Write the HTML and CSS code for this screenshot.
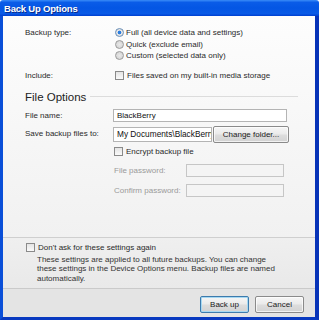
FILE: index.html
```html
<!DOCTYPE html>
<html>
<head>
<meta charset="utf-8">
<link rel="stylesheet" href="styles.css">
</head>
<body>
<div class="window">
  <div class="titlebar"><span class="title">Back Up Options</span></div>
  <div class="frame">
    <div class="client">
      <div class="upper">
        <div class="row row-type">
          <div class="label">Backup type:</div>
          <div class="options">
            <div class="opt"><span class="radio checked"></span>Full (all device data and settings)</div>
            <div class="opt"><span class="radio"></span>Quick (exclude email)</div>
            <div class="opt"><span class="radio"></span>Custom (selected data only)</div>
          </div>
        </div>
        <div class="row row-include">
          <div class="label">Include:</div>
          <div class="opt"><span class="check"></span>Files saved on my built-in media storage</div>
        </div>
        <div class="heading"><span>File Options</span><span class="rule"></span></div>
        <div class="row row-name">
          <div class="label">File name:</div>
          <div class="input input-name">BlackBerry</div>
        </div>
        <div class="row row-save">
          <div class="label">Save backup files to:</div>
          <div class="input input-save">My Documents\BlackBerry</div>
          <div class="btn btn-folder">Change folder...</div>
        </div>
        <div class="row row-encrypt">
          <div class="label"></div>
          <div class="opt"><span class="check"></span>Encrypt backup file</div>
        </div>
        <div class="pwrow pw1">
          <div class="pwlabel">File password:</div>
          <div class="input disabled"></div>
        </div>
        <div class="pwrow pw2">
          <div class="pwlabel">Confirm password:</div>
          <div class="input disabled"></div>
        </div>
      </div>
      <div class="lower">
        <div class="opt dontask"><span class="check"></span>Don't ask for these settings again</div>
        <p class="note">These settings are applied to all future backups. You can change<br>these settings in the Device Options menu. Backup files are named<br>automatically.</p>
      </div>
      <div class="actions">
        <div class="btn btn-default">Back up</div>
        <div class="btn">Cancel</div>
      </div>
    </div>
  </div>
</div>
</body>
</html>
```

FILE: styles.css
```css
html, body {
  margin: 0;
  padding: 0;
  background: #fff;
}
.window {
  width: 319px;
  height: 320px;
  display: flex;
  flex-direction: column;
  font-family: "Liberation Sans", Arial, sans-serif;
  font-size: 8px;
  color: #2a2a2a;
}
.titlebar {
  height: 16px;
  flex: none;
  background: linear-gradient(#3a8cf8 0, #0a5ce8 15%, #0456e4 50%, #0a5ae6 85%, #003fcf 100%);
  display: flex;
  align-items: center;
  padding-left: 4px;
  border-radius: 3px 3px 0 0;
}
.title {
  color: #fff;
  font-weight: bold;
  font-size: 9.5px;
  letter-spacing: -0.2px;
  text-shadow: 1px 1px 0 #0a2a8a;
}
.frame {
  flex: 1;
  display: flex;
  border-left: 3px solid #0a4fd8;
  border-right: 4px solid #0733b8;
  border-bottom: 3px solid #0839c0;
  min-height: 0;
}
.client {
  flex: 1;
  display: flex;
  flex-direction: column;
}
.upper {
  height: 222px;
  flex: none;
  box-sizing: border-box;
  padding: 11px 0 0 22px;
  background: linear-gradient(#fdfdfd, #f1f1f1);
  border-bottom: 1px solid #cfcfcf;
}
.row {
  display: flex;
  align-items: center;
}
.label {
  width: 90px;
  flex: none;
  line-height: 11.5px;
}
.row-type {
  align-items: flex-start;
}
.opt {
  display: flex;
  align-items: center;
  line-height: 11.5px;
  white-space: nowrap;
}
.radio {
  width: 7px;
  height: 7px;
  border: 1px solid #9a9a9a;
  border-radius: 50%;
  background: radial-gradient(#e8e8e8, #d0d0d0);
  margin-right: 2px;
  box-sizing: content-box;
  flex: none;
}
.radio.checked {
  background: radial-gradient(circle, #2a7de0 0, #2a7de0 30%, #e8e8e8 45%, #d6d6d6 100%);
  border-color: #6a8fb8;
}
.check {
  width: 7px;
  height: 7px;
  border: 1px solid #8a8a8a;
  background: linear-gradient(#e4e4e4, #fafafa);
  margin-right: 3px;
  flex: none;
}
.row-include {
  margin-top: 8.5px;
}
.heading {
  display: flex;
  align-items: center;
  margin-top: 8px;
  font-size: 11.5px;
  line-height: 14px;
  color: #222;
  width: 273px;
}
.rule {
  flex: 1;
  height: 1px;
  background: #dcdcdc;
  margin-left: 4px;
}
.row-name {
  margin-top: 5px;
  height: 14px;
}
.input {
  height: 13px;
  box-sizing: border-box;
  border: 1px solid #b4b4b4;
  background: #fff;
  line-height: 11px;
  padding-left: 3px;
  white-space: nowrap;
  overflow: hidden;
  color: #111;
}
.input-name {
  width: 174px;
  margin-left: -2px;
}
.row-save {
  margin-top: 3px;
  height: 17px;
}
.input-save {
  width: 99px;
  height: 15px;
  line-height: 13px;
  margin-left: -2px;
  margin-right: 1px;
  font-size: 8.3px;
}
.btn {
  height: 17px;
  box-sizing: border-box;
  border: 1px solid #8a8a8a;
  border-radius: 2px;
  background: linear-gradient(#f6f6f6 0, #ebebeb 45%, #dcdcdc 55%, #d3d3d3 100%);
  box-shadow: inset 0 0 0 1px rgba(255,255,255,0.7);
  display: flex;
  align-items: center;
  justify-content: center;
  color: #1a1a1a;
  white-space: nowrap;
}
.btn-folder {
  width: 76px;
}
.row-encrypt {
  margin-top: 3px;
}
.row-encrypt .opt {
  margin-left: -1px;
}
.pwrow {
  display: flex;
  align-items: center;
  padding-left: 89px;
  color: #9a9a9a;
  height: 13px;
}
.pwlabel {
  width: 72px;
  flex: none;
}
.pwrow .input {
  width: 98px;
  border-color: #c6c6c6;
  background: #f4f4f4;
}
.pw1 {
  margin-top: 7px;
}
.pw2 {
  margin-top: 7px;
}
.lower {
  height: 51px;
  flex: none;
  box-sizing: border-box;
  padding: 5px 0 0 23px;
  background: linear-gradient(#efefef, #e9e9e9);
  border-bottom: 1px solid #cacaca;
}
.dontask {
  line-height: 9px;
}
.note {
  margin: 3px 0 0 11px;
  line-height: 9.4px;
  white-space: nowrap;
  color: #333;
}
.actions {
  flex: 1;
  display: flex;
  justify-content: flex-end;
  align-items: flex-start;
  gap: 6px;
  padding: 7px 11px 0 0;
  background: #e4e4e4;
}
.actions .btn {
  width: 49px;
}
.btn-default {
  border-color: #3d7bad;
  box-shadow: inset 0 0 0 1px #a6d8f2;
}
```
